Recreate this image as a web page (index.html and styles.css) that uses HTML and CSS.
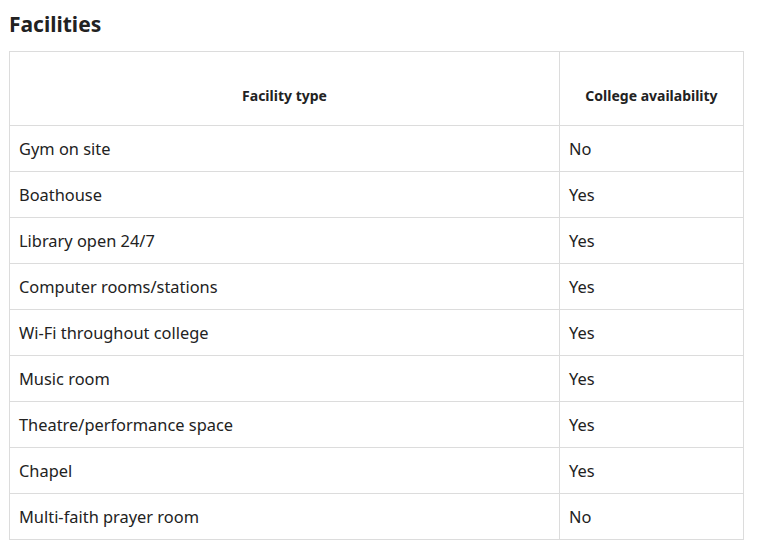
FILE: index.html
```html
<!DOCTYPE html>
<html>
<head>
<meta charset="utf-8">
<link rel="stylesheet" href="styles.css">
</head>
<body>
<h2 class="title">Facilities</h2>
<table class="facilities">
  <thead>
    <tr><th class="col-type">Facility type</th><th class="col-avail">College availability</th></tr>
  </thead>
  <tbody>
    <tr><td>Gym on site</td><td>No</td></tr>
    <tr><td>Boathouse</td><td>Yes</td></tr>
    <tr><td>Library open 24/7</td><td>Yes</td></tr>
    <tr><td>Computer rooms/stations</td><td>Yes</td></tr>
    <tr><td>Wi-Fi throughout college</td><td>Yes</td></tr>
    <tr><td>Music room</td><td>Yes</td></tr>
    <tr><td>Theatre/performance space</td><td>Yes</td></tr>
    <tr><td>Chapel</td><td>Yes</td></tr>
    <tr><td>Multi-faith prayer room</td><td>No</td></tr>
  </tbody>
</table>
</body>
</html>
```
FILE: styles.css
```css
html, body {
  margin: 0;
  padding: 0;
  background: #fff;
}
body {
  padding: 12px 9px;
  font-family: "Noto Sans", "Open Sans", sans-serif;
  color: #222;
}
.title {
  margin: 0 0 15px 0;
  font-size: 21px;
  line-height: 24px;
  font-weight: 700;
  color: #222;
}
.facilities {
  border-collapse: collapse;
  width: 735px;
}
.facilities th,
.facilities td {
  border: 1px solid #dcdcdc;
  padding: 0 9px;
  text-align: left;
  vertical-align: middle;
}
.facilities th {
  height: 74px;
  font-size: 14px;
  font-weight: 700;
  text-align: center;
  vertical-align: bottom;
  padding-bottom: 20px;
  box-sizing: border-box;
}
.facilities td {
  height: 45px;
  font-size: 16.4px;
}
.col-type { width: 550px; }
```
